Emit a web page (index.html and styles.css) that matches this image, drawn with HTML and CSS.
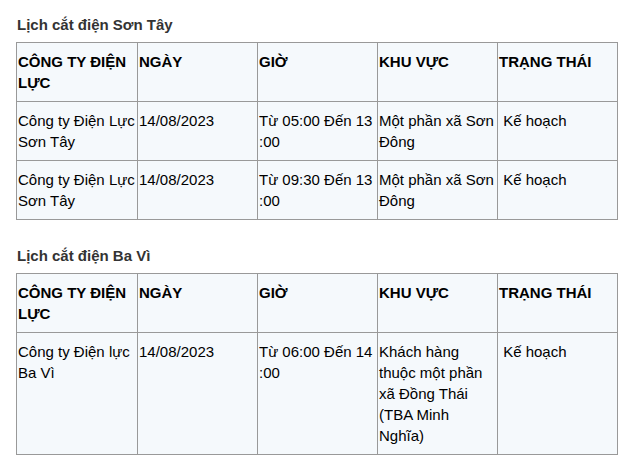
FILE: index.html
```html
<!DOCTYPE html>
<html lang="vi">
<head>
<meta charset="utf-8">
<title>Lịch cắt điện</title>
<link rel="stylesheet" href="styles.css">
</head>
<body>
<section class="block">
  <h3 class="title">Lịch cắt điện Sơn Tây</h3>
  <table class="schedule">
    <colgroup><col class="c1"><col class="c"><col class="c"><col class="c"><col class="c"></colgroup>
    <thead>
      <tr><th>CÔNG TY ĐIỆN LỰC</th><th>NGÀY</th><th>GIỜ</th><th>KHU VỰC</th><th>TRẠNG THÁI</th></tr>
    </thead>
    <tbody>
      <tr><td>Công ty Điện Lực Sơn Tây</td><td>14/08/2023</td><td>Từ 05:00 Đến 13<wbr>:00</td><td>Một phần xã Sơn Đông</td><td>&nbsp;Kế hoạch</td></tr>
      <tr><td>Công ty Điện Lực Sơn Tây</td><td>14/08/2023</td><td>Từ 09:30 Đến 13<wbr>:00</td><td>Một phần xã Sơn Đông</td><td>&nbsp;Kế hoạch</td></tr>
    </tbody>
  </table>
</section>
<section class="block">
  <h3 class="title">Lịch cắt điện Ba Vì</h3>
  <table class="schedule">
    <colgroup><col class="c1"><col class="c"><col class="c"><col class="c"><col class="c"></colgroup>
    <thead>
      <tr><th>CÔNG TY ĐIỆN LỰC</th><th>NGÀY</th><th>GIỜ</th><th>KHU VỰC</th><th>TRẠNG THÁI</th></tr>
    </thead>
    <tbody>
      <tr><td>Công ty Điện lực Ba Vì</td><td>14/08/2023</td><td>Từ 06:00 Đến 14<wbr>:00</td><td>Khách hàng thuộc một phần xã Đồng Thái (TBA Minh Nghĩa)</td><td>&nbsp;Kế hoạch</td></tr>
    </tbody>
  </table>
</section>
</body>
</html>
```
FILE: styles.css
```css
html, body {
  margin: 0;
  padding: 0;
  background: #fff;
}
body {
  padding: 15px 0 0 16px;
  font-family: "Liberation Sans", Arial, sans-serif;
  font-size: 15px;
  line-height: 21px;
  color: #000;
}
.block + .block {
  margin-top: 26px;
}
.title {
  margin: 0 0 7px 1px;
  font-size: 15px;
  line-height: 20px;
  font-weight: bold;
  color: #333;
}
.schedule {
  border-collapse: collapse;
  table-layout: fixed;
  width: 601px;
}
.schedule .c1 { width: 121px; }
.schedule .c { width: 120px; }
.schedule th,
.schedule td {
  border: 1px solid #999;
  background: #f5f9fc;
  padding: 8px 0 8px 1px;
  text-align: left;
  vertical-align: top;
  font-size: 15px;
  line-height: 21px;
  color: #000;
}
.schedule th {
  font-weight: bold;
}
```
